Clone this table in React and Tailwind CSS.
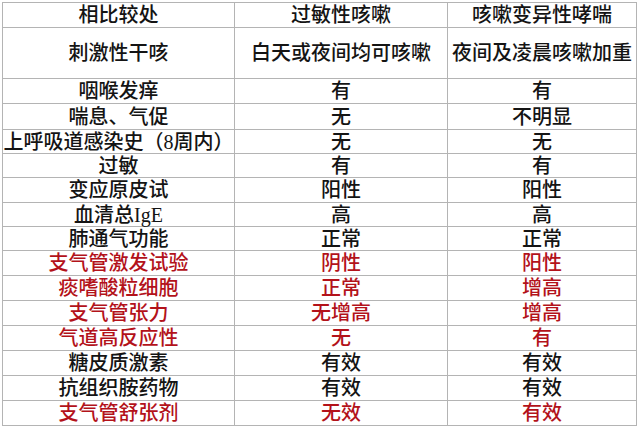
const RED = "text-[#b3121a]";

const rows = [
  { h: "h-[25px]", cells: ["相比较处", "过敏性咳嗽", "咳嗽变异性哮喘"] },
  { h: "h-[51px]", cells: ["刺激性干咳", "白天或夜间均可咳嗽", "夜间及凌晨咳嗽加重"] },
  { h: "h-[25px]", cells: ["咽喉发痒", "有", "有"] },
  { h: "h-[26px]", cells: ["喘息、气促", "无", "不明显"] },
  { h: "h-[24px]", cells: ["上呼吸道感染史（8周内）", "无", "无"] },
  { h: "h-[24px]", cells: ["过敏", "有", "有"] },
  { h: "h-[25px]", cells: ["变应原皮试", "阳性", "阳性"] },
  { h: "h-[24px]", cells: ["血清总IgE", "高", "高"] },
  { h: "h-[24px]", cells: ["肺通气功能", "正常", "正常"] },
  { h: "h-[25px]", cells: ["支气管激发试验", "阴性", "阳性"], red: true },
  { h: "h-[25px]", cells: ["痰嗜酸粒细胞", "正常", "增高"], red: true },
  { h: "h-[25px]", cells: ["支气管张力", "无增高", "增高"], red: true },
  { h: "h-[25px]", cells: ["气道高反应性", "无", "有"], red: true },
  { h: "h-[25px]", cells: ["糖皮质激素", "有效", "有效"] },
  { h: "h-[25px]", cells: ["抗组织胺药物", "有效", "有效"] },
  { h: "h-[25px]", cells: ["支气管舒张剂", "无效", "有效"], red: true },
];

const widths = ["w-[232px]", "w-[213px]", "w-[189px]"];

export default function App() {
  return (
    <div className="min-h-screen bg-white pt-[2px] pl-[2px]">
      <div
        className="w-[635px] border-l border-t border-[#b4b4b4] text-[20px] leading-none text-[#141414] font-medium"
        style={{ fontFamily: '"Liberation Serif", "Noto Sans CJK SC", serif' }}
      >
        {rows.map((row, i) => (
          <div key={i} className={`flex border-b border-[#b4b4b4] ${row.h}`}>
            {row.cells.map((text, j) => (
              <div
                key={j}
                className={`${widths[j]} flex items-center justify-center whitespace-nowrap border-r border-[#b4b4b4] ${
                  row.red ? RED : ""
                }`}
              >
                {text}
              </div>
            ))}
          </div>
        ))}
      </div>
    </div>
  );
}
